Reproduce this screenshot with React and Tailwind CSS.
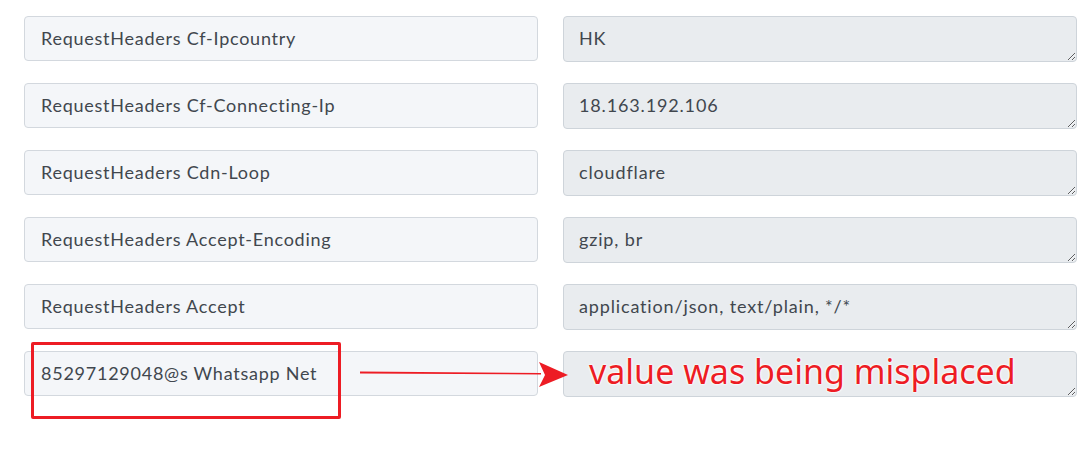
import React from "react";

const rows = [
  ["RequestHeaders Cf-Ipcountry", "HK"],
  ["RequestHeaders Cf-Connecting-Ip", "18.163.192.106"],
  ["RequestHeaders Cdn-Loop", "cloudflare"],
  ["RequestHeaders Accept-Encoding", "gzip, br"],
  ["RequestHeaders Accept", "application/json, text/plain, */*"],
  ["85297129048@s Whatsapp Net", ""],
];

const font = { fontFamily: "Lato, 'Open Sans', sans-serif" };

export default function App() {
  return (
    <div className="relative w-[1081px] h-[466px] bg-white overflow-hidden" style={font}>
      <div className="flex flex-col gap-[21px] pl-[24px] pt-[16px]">
        {rows.map(([key, value], i) => (
          <div key={i} className="flex gap-[25px]">
            <div className="w-[514px] h-[45px] flex items-center px-[16px] bg-[#f4f6f9] border border-[#d3d8de] rounded-[4px] text-[18px] tracking-[0.75px] text-[#41474e]">
              {key}
            </div>
            <textarea
              readOnly
              value={value}
              className="w-[514px] h-[46px] px-[15px] py-[9px] bg-[#e9ecef] border border-[#ced4da] rounded-[4px] text-[18px] tracking-[0.85px] leading-[25px] text-[#41474e] outline-none"
              style={font}
            />
          </div>
        ))}
      </div>

      {/* annotation: box around the misplaced key */}
      <div className="absolute left-[31px] top-[342px] w-[310px] h-[77px] border-[3px] border-[#ed1c24] rounded-[2px]" />

      {/* annotation: arrow pointing to the value field */}
      <svg className="absolute left-[355px] top-[358px]" width="220" height="32" viewBox="0 0 220 32">
        <path d="M5 13.5 L186 15 L186 16.5 L5 15.5 Z" fill="#ed1c24" />
        <path d="M184 4 L213 17 L184 29 L190 17 Z" fill="#ed1c24" />
      </svg>

      {/* annotation: label */}
      <div
        className="absolute left-[589px] top-[349px] text-[34px] leading-[44px] text-[#ed1c24]"
        style={{
          fontFamily: "'Noto Sans', 'Open Sans', sans-serif",
          textShadow: "0 0 2px #fff, 0 0 2px #fff, 0 0 3px #fff",
        }}
      >
        value was being misplaced
      </div>
    </div>
  );
}
